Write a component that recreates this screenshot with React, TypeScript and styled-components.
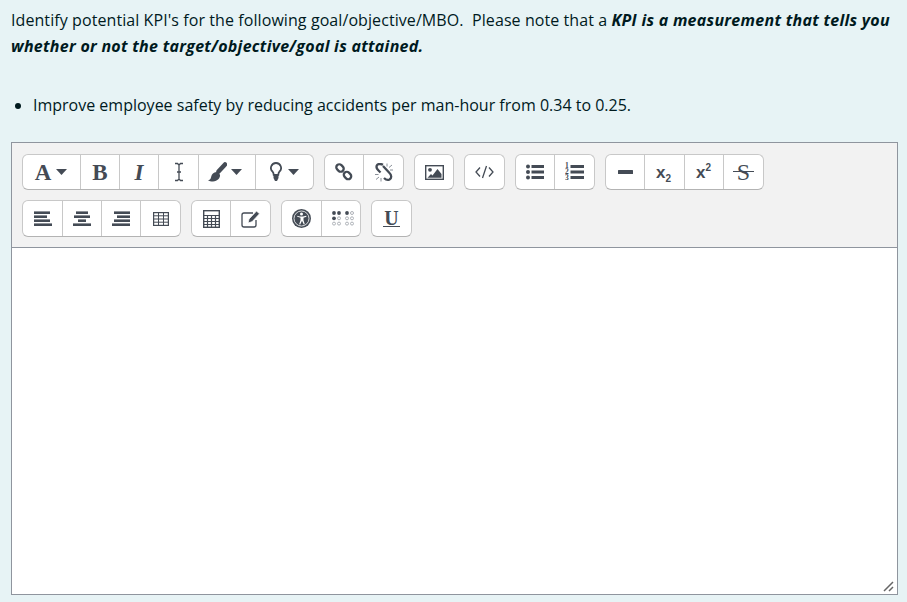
import React from "react";
import styled, { createGlobalStyle } from "styled-components";

const Global = createGlobalStyle`
  html, body { margin: 0; padding: 0; background: #e7f3f5; }
  body { font-family: "Open Sans", "Noto Sans", sans-serif; color: #001a1e; }
`;

const Page = styled.div`
  width: 907px;
  height: 602px;
  overflow: hidden;
  box-sizing: border-box;
  padding: 7px 9px 0 11px;
`;
const Prompt = styled.p`
  margin: 0;
  font-size: 16px;
  line-height: 26px;
  letter-spacing: 0.08px;
  white-space: pre-wrap;
  b { font-weight: 700; font-style: italic; letter-spacing: 0.27px; }
`;
const Bullets = styled.ul`
  margin: 33px 0 0;
  padding: 0 0 0 22px;
  font-size: 16px;
  line-height: 26px;
`;
const Editor = styled.div`
  margin-top: 24px;
  height: 453px;
  box-sizing: border-box;
  border: 1px solid #8f959e;
  background: #fff;
  display: flex;
  flex-direction: column;
  position: relative;
`;
const Toolbar = styled.div`
  background: #f2f2f2;
  border-bottom: 1px solid #8f959e;
  padding: 11px 10px 10px;
  height: 105px;
  box-sizing: border-box;
  display: flex;
  flex-direction: column;
  gap: 10px;
`;
const Row = styled.div<{ $h: number }>`
  display: flex;
  gap: 10px;
  height: ${(p) => p.$h}px;
`;
const Group = styled.div`
  display: flex;
  background: #fff;
  border: 1px solid #c8c8c8;
  border-bottom-color: #b3b3b3;
  border-radius: 6px;
  box-sizing: border-box;
`;
const Btn = styled.div<{ $w: number; $gap?: number; $pr?: number }>`
  width: ${(p) => p.$w}px;
  box-sizing: border-box;
  display: flex;
  align-items: center;
  justify-content: center;
  gap: ${(p) => p.$gap ?? 4}px;
  padding-right: ${(p) => p.$pr ?? 0}px;
  color: #444b55;
  & + & { border-left: 1px solid #c8c8c8; }
`;
const Serif = styled.span<{ $i?: boolean; $size?: number }>`
  font-family: "Liberation Serif", serif;
  font-weight: 700;
  font-size: ${(p) => p.$size ?? 23}px;
  line-height: 1;
  font-style: ${(p) => (p.$i ? "italic" : "normal")};
  color: #444b55;
`;
const UMark = styled(Serif)`
  border-bottom: 1px solid #444b55;
  padding: 0 1px;
  font-size: 20px;
  line-height: 15px;
`;
const Strike = styled(Serif)`
  position: relative;
  font-weight: 400;
  font-size: 24px;
  padding: 0 4px;
  &::after {
    content: "";
    position: absolute;
    left: 0;
    right: 0;
    top: 11px;
    height: 1px;
    background: #444b55;
  }
`;
const Script = styled.span`
  font-family: "Liberation Sans", sans-serif;
  font-weight: 700;
  font-size: 17px;
  color: #444b55;
  line-height: 1;
  sub, sup { font-size: 10px; line-height: 0; font-weight: 700; }
`;
const Grip = styled.svg`
  position: absolute;
  right: 2px;
  bottom: 1px;
`;

const Ic = ({ w = 16, h = 16, children }: { w?: number; h?: number; children: React.ReactNode }) => (
  <svg width={w} height={h} viewBox={`0 0 ${w} ${h}`} fill="#444b55">
    {children}
  </svg>
);
const Caret = () => (
  <svg width="11" height="6" viewBox="0 0 11 6" fill="#444b55"><path d="M0 0h11L5.5 6z" /></svg>
);
const Lines = ({ rows }: { rows: [number, number][] }) => (
  <Ic w={18} h={15}>
    {rows.map(([x, w], i) => (
      <rect key={i} x={x} y={i * 4 + 0.4} width={w} height={2.6} />
    ))}
  </Ic>
);
const Bars = ({ x }: { x: number }) => (
  <>
    <rect x={x} y={1} width={18 - x} height={3} />
    <rect x={x} y={6.5} width={18 - x} height={3} />
    <rect x={x} y={12} width={18 - x} height={3} />
  </>
);

export default function App() {
  return (
    <Page>
      <Global />
      <Prompt>
        {"Identify potential KPI's for the following goal/objective/MBO.  Please note that a "}
        <b>KPI is a measurement that tells you whether or not the target/objective/goal is attained.</b>
      </Prompt>
      <Bullets>
        <li>Improve employee safety by reducing accidents per man-hour from 0.34 to 0.25.</li>
      </Bullets>
      <Editor>
        <Toolbar>
          <Row $h={36}>
            <Group>
              <Btn $w={57} $gap={5} $pr={1}><Serif>A</Serif><Caret /></Btn>
              <Btn $w={39}><Serif>B</Serif></Btn>
              <Btn $w={39}><Serif $i>I</Serif></Btn>
              <Btn $w={40}>
                <Ic w={10} h={20}>
                  <path d="M1 1.500h2.500L5 3l1.500-1.500H9M1 18.500h2.500L5 17l1.500 1.500H9M5 3v14M3 10h4" fill="none" stroke="#444b55" strokeWidth="1.300" />
                </Ic>
              </Btn>
              <Btn $w={57} $pr={4}>
                <Ic w={19} h={20}>
                  <path d="M17 2.500L10.500 9.500" stroke="#444b55" strokeWidth="4.500" strokeLinecap="round" fill="none" />
                  <path d="M6.500 10.500c2.500-1.500 5 .5 5.500 2.500.5 2.500-2.500 6.500-7 6.500-2 0-4-.5-5-1.500 1.500 0 2.500-.5 3-2.500.3-1.500 1-4 3.500-5z" />
                </Ic>
                <Caret />
              </Btn>
              <Btn $w={58} $gap={6}>
                <Ic w={12} h={20}>
                  <path d="M6 1a5 5 0 0 0-3.300 8.800c.8.800.9 2 1 3h4.600c.1-1 .2-2.200 1-3A5 5 0 0 0 6 1z" fill="none" stroke="#444b55" strokeWidth="1.800" />
                  <path d="M3.500 13h5v3L7 19H5l-1.500-3z" />
                </Ic>
                <Caret />
              </Btn>
            </Group>
            <Group>
              <Btn $w={38}>
                <Ic w={18} h={18}>
                  <g fill="none" stroke="#444b55" strokeWidth="2.300">
                    <rect x="1" y="2" width="8" height="6" rx="3" transform="rotate(45 5 5)" />
                    <rect x="8.500" y="9.500" width="8" height="6" rx="3" transform="rotate(45 12.500 12.500)" />
                  </g>
                </Ic>
              </Btn>
              <Btn $w={40}>
                <Ic w={18} h={19}>
                  <g fill="none" stroke="#444b55" strokeWidth="2.300">
                    <path d="M8 1.800C5 .3 1.500 1 1.500 4c0 2 2 3.500 4 5.500" />
                    <path d="M8 3l6.500 7c2 2 2.500 5 0 6.500-2 1-4 0-5.500-1.500" />
                  </g>
                  <g stroke="#8a9099" strokeWidth="1"><path d="M12 .5v3M17 2l-3 2.500M18 7h-3M0 11.500h3.500M1 16.500l3-2.500M6 18.500v-3.500" /></g>
                </Ic>
              </Btn>
            </Group>
            <Group>
              <Btn $w={38}>
                <Ic w={19} h={15}>
                  <rect x=".7" y=".7" width="17.600" height="13.600" fill="none" stroke="#444b55" strokeWidth="1.400" />
                  <circle cx="5" cy="4.800" r="1.900" />
                  <path d="M2.500 12.800l3.500-3.800 1.500 1.500 5-6.500 4 5v3.800z" />
                </Ic>
              </Btn>
            </Group>
            <Group>
              <Btn $w={39}>
                <Ic w={19} h={14}>
                  <path d="M5 2.500L1 7l4 4.500M14 2.500L18 7l-4 4.500M11.500 1L7.500 13" fill="none" stroke="#444b55" strokeWidth="1.300" />
                </Ic>
              </Btn>
            </Group>
            <Group>
              <Btn $w={38}>
                <Ic w={18} h={16}>
                  <circle cx="2" cy="2.500" r="2" /><circle cx="2" cy="8" r="2" /><circle cx="2" cy="13.500" r="2" />
                  <Bars x={5.500} />
                </Ic>
              </Btn>
              <Btn $w={40}>
                <Ic w={19} h={20}>
                  <text x="0" y="6" fontSize="7.500" fontWeight="700" fontFamily="Liberation Serif, serif">1</text>
                  <text x="0" y="12.200" fontSize="7.500" fontWeight="700" fontFamily="Liberation Serif, serif">2</text>
                  <text x="0" y="18.400" fontSize="7.500" fontWeight="700" fontFamily="Liberation Serif, serif">3</text>
                  <g transform="translate(1 2)"><Bars x={4.500} /></g>
                </Ic>
              </Btn>
            </Group>
            <Group>
              <Btn $w={38}><Ic w={15} h={4}><rect width="15" height="4" rx=".5" /></Ic></Btn>
              <Btn $w={40} $pr={2}><Script>x<sub>2</sub></Script></Btn>
              <Btn $w={39} $pr={1}><Script>x<sup>2</sup></Script></Btn>
              <Btn $w={40}><Strike>S</Strike></Btn>
            </Group>
          </Row>
          <Row $h={37}>
            <Group>
              <Btn $w={39}><Lines rows={[[0, 16], [0, 13], [0, 16], [0, 18]]} /></Btn>
              <Btn $w={39}><Lines rows={[[3, 12], [1, 16], [5, 8], [0, 18]]} /></Btn>
              <Btn $w={39}><Lines rows={[[2, 16], [5, 13], [2, 16], [0, 18]]} /></Btn>
              <Btn $w={40}>
                <Ic w={16} h={14}>
                  <rect x=".6" y=".6" width="14.800" height="12.800" fill="none" stroke="#444b55" strokeWidth="1.200" />
                  <path d="M.6 3.800h14.800M.6 7h14.800M.6 10.200h14.800M5.500.6v12.800M10.500.6v12.800" stroke="#444b55" strokeWidth="1" fill="none" />
                </Ic>
              </Btn>
            </Group>
            <Group>
              <Btn $w={38}>
                <Ic w={17} h={18}>
                  <rect x=".7" y=".7" width="15.600" height="16.600" fill="none" stroke="#444b55" strokeWidth="1.400" />
                  <path d="M.7 5.500h15.600M.7 8.500h15.600M.7 11.500h15.600M.7 14.500h15.600M4.500 5.500v12M8.500 5.500v12M12.500 5.500v12" stroke="#444b55" strokeWidth="1.200" fill="none" />
                </Ic>
              </Btn>
              <Btn $w={40}>
                <Ic w={19} h={18}>
                  <path d="M12 3H3a2 2 0 0 0-2 2v10a2 2 0 0 0 2 2h10a2 2 0 0 0 2-2V10" fill="none" stroke="#444b55" strokeWidth="1.300" />
                  <path d="M15.500 1l3 2.800-7.500 8-4 1.200 1-4z" stroke="#fff" strokeWidth=".8" />
                </Ic>
              </Btn>
            </Group>
            <Group>
              <Btn $w={39}>
                <Ic w={19} h={19}>
                  <circle cx="9.500" cy="9.500" r="9.500" />
                  <circle cx="9.500" cy="9.500" r="7.500" fill="none" stroke="#fff" strokeWidth=".8" />
                  <circle cx="9.500" cy="5" r="1.500" fill="#fff" />
                  <path d="M4.800 6.800l3.200.8h3l3.200-.8.300 1-3 1v2.400l1.300 4-1 .4-1.800-3.800-1.800 3.800-1-.4 1.300-4V8.800l-3-1z" fill="#fff" />
                </Ic>
              </Btn>
              <Btn $w={39}>
                <Ic w={26} h={15}>
                  <g transform="translate(4 0)">
                    <circle cx="2" cy="2" r="1.900" /><circle cx="7" cy="2" r="1.900" /><circle cx="2" cy="7.300" r="1.900" /><circle cx="15" cy="2" r="1.900" />
                    <g fill="none" stroke="#aeb2b8" strokeWidth="1">
                      <circle cx="7" cy="7.300" r="1.500" /><circle cx="2" cy="12.600" r="1.500" /><circle cx="7" cy="12.600" r="1.500" />
                      <circle cx="20" cy="2" r="1.500" /><circle cx="15" cy="7.300" r="1.500" /><circle cx="20" cy="7.300" r="1.500" /><circle cx="15" cy="12.600" r="1.500" /><circle cx="20" cy="12.600" r="1.500" />
                    </g>
                  </g>
                </Ic>
              </Btn>
            </Group>
            <Group>
              <Btn $w={39}><UMark>U</UMark></Btn>
            </Group>
          </Row>
        </Toolbar>
        <Grip width="12" height="12" viewBox="0 0 12 12" fill="none" stroke="#666" strokeWidth="1.500">
          <path d="M1 10L10 1M6 10l4-4" />
        </Grip>
      </Editor>
    </Page>
  );
}
